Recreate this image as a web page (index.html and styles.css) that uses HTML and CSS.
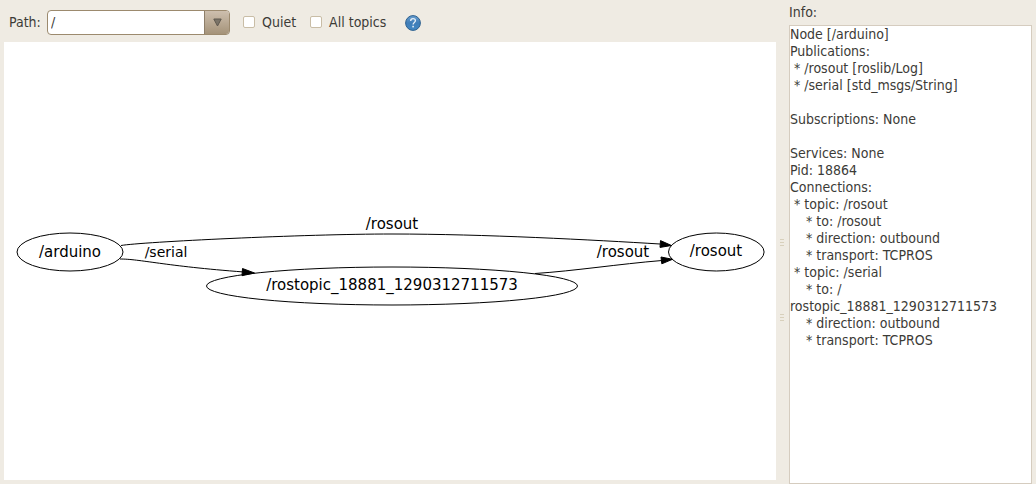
FILE: index.html
```html
<!DOCTYPE html>
<html lang="en">
<head>
<meta charset="utf-8">
<title>Graph viewer</title>
<link rel="stylesheet" href="styles.css">
</head>
<body>
<div class="app">
  <main class="main">
    <form class="toolbar">
      <label class="path-label" for="path">Path:</label>
      <div class="combo">
        <input class="combo-input" id="path" type="text" value="/">
        <button class="combo-button" type="button" aria-label="Show paths">
          <svg width="9" height="9" viewBox="0 0 9 9"><path d="M0.8 1H8.2L4.5 8Z" fill="#7b7468" stroke="#5f594f" stroke-width="1"/></svg>
        </button>
      </div>
      <label class="option"><input class="check" type="checkbox">Quiet</label>
      <label class="option"><input class="check" type="checkbox">All topics</label>
      <button class="help" type="button" aria-label="Help">
        <svg width="16" height="16" viewBox="0 0 16 16">
          <defs><linearGradient id="ball" x1="0" y1="0" x2="0" y2="1"><stop offset="0" stop-color="#6ba0d0"/><stop offset="0.5" stop-color="#3f7db8"/><stop offset="1" stop-color="#4388c4"/></linearGradient></defs>
          <circle cx="8" cy="8" r="7.4" fill="url(#ball)" stroke="#2f618f" stroke-width="1"/>
          <path d="M5.7 5.9C5.7 4.4 6.7 3.7 8 3.7S10.4 4.5 10.4 5.8C10.4 7.4 8.1 7.5 8.1 9.5" fill="none" stroke="#e8f0f8" stroke-width="1.3"/>
          <rect x="7.3" y="10.8" width="1.6" height="1.6" fill="#e8f0f8"/>
        </svg>
      </button>
    </form>
    <section class="canvas">
      <svg class="graph" viewBox="0 0 772 438">
        <g class="line">
          <ellipse cx="66" cy="210" rx="53" ry="19"/>
          <ellipse cx="388" cy="244" rx="185.500" ry="19"/>
          <ellipse cx="712.300" cy="210" rx="47.800" ry="19"/>
          <path d="M117 203.500C137 200 300 192 388 192C480 192 590 198 656 202"/>
          <path d="M116 217C136 217 160 224 240 230"/>
          <path d="M531 231.500C570 229 615 222 658 218.500"/>
        </g>
        <path d="M656.500 198.600L667.500 203.500L656 205.400Z M238.500 226.500L250.500 231L238 233.700Z M657 215L668.500 217.300L657.800 221.800Z" stroke="#000"/>
        <g class="label">
          <text x="66" y="215">/arduino</text>
          <text x="388" y="248">/rostopic_18881_1290312711573</text>
          <text x="712" y="214">/rosout</text>
          <text x="388" y="187">/rosout</text>
          <text class="label-small" x="162" y="215">/serial</text>
          <text x="619" y="215">/rosout</text>
        </g>
      </svg>
    </section>
  </main>
  <div class="sash"><span class="grip"></span><span class="grip"></span></div>
  <aside class="info">
    <label class="info-label" for="info">Info:</label>
    <textarea class="info-text" id="info" readonly spellcheck="false">Node [/arduino]
Publications:
 * /rosout [roslib/Log]
 * /serial [std_msgs/String]

Subscriptions: None

Services: None
Pid: 18864
Connections:
 * topic: /rosout
    * to: /rosout
    * direction: outbound
    * transport: TCPROS
 * topic: /serial
    * to: /
rostopic_18881_1290312711573
    * direction: outbound
    * transport: TCPROS</textarea>
  </aside>
</div>
</body>
</html>
```
FILE: styles.css
```css
* { box-sizing: border-box; }

body {
  margin: 0;
  background: #efebe3;
  color: #3c3b37;
  font: 14px/17px "DejaVu Sans Condensed", "DejaVu Sans", sans-serif;
}

input, button, textarea {
  font: inherit;
  color: inherit;
}

.app {
  display: flex;
  min-height: 100vh;
}

.main {
  flex: 1;
  display: flex;
  flex-direction: column;
  min-width: 0;
  padding: 0 0 4px 4px;
}

.toolbar {
  display: flex;
  align-items: center;
  height: 42px;
  padding: 2px 4px 0;
}

.path-label { width: 39px; padding-left: 1px; }

.combo {
  display: flex;
  width: 183px;
  height: 25px;
  border: 1px solid #9c8a6e;
  border-radius: 4px;
  background: #fff;
  overflow: hidden;
}

.combo-input {
  flex: 1;
  min-width: 0;
  padding: 0 3px;
  border: 0;
  background: transparent;
  outline: 0;
}

.combo-button {
  display: flex;
  align-items: center;
  justify-content: center;
  width: 25px;
  padding: 0;
  border: 0;
  border-left: 1px solid #8d7e69;
  background: linear-gradient(#cdbfae, #a59379);
}

.option {
  display: flex;
  align-items: center;
  gap: 7px;
  margin-left: 13px;
}

.option + .option { margin-left: 14px; }

.check {
  appearance: none;
  width: 12px;
  height: 12px;
  margin: 0;
  border: 1px solid #c9bda6;
  border-radius: 2px;
  background: #fff;
}

.help {
  display: flex;
  margin-left: 19px;
  padding: 2px 0 0;
  border: 0;
  background: none;
}

.canvas {
  flex: 1;
  display: flex;
  background: #fff;
}

.graph { width: 100%; }

.line {
  fill: none;
  stroke: #000;
  stroke-width: 1px;
}

.label {
  font-family: "DejaVu Sans", sans-serif;
  font-size: 15px;
  text-anchor: middle;
}

.label-small { font-size: 14px; }

.sash {
  display: flex;
  flex-direction: column;
  align-items: center;
  gap: 68px;
  width: 13px;
  padding: 239px 1px 0 0;
}

.grip {
  width: 4px;
  height: 7px;
  background: repeating-linear-gradient(#d8d0bc 0 1px, transparent 1px 3px);
}

.info {
  display: flex;
  flex-direction: column;
  width: 247px;
  padding: 4px 4px 0 0;
}

.info-label { height: 21px; }

.info-text {
  flex: 1;
  padding: 0;
  border: 1px solid #d5ccbf;
  background: #fff;
  outline: 0;
  resize: none;
}
```
